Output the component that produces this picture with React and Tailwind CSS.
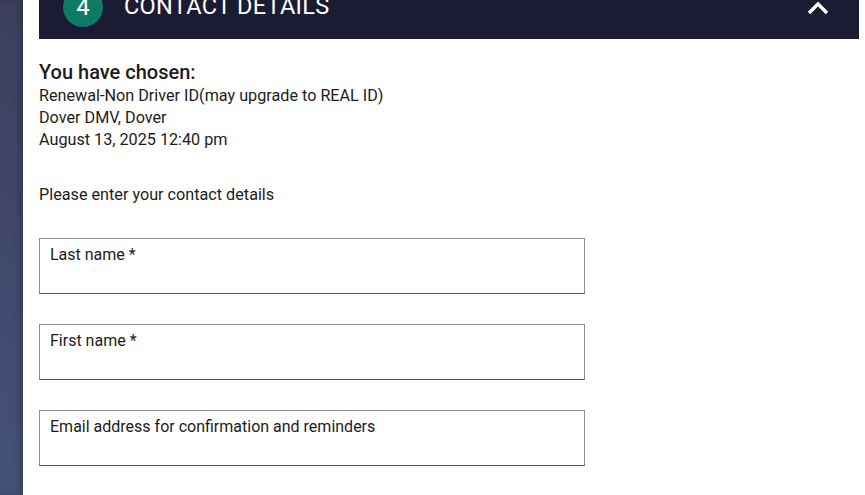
const Field = ({ label }) => {
    return (
        <div className="w-[546px] h-[56px] border border-[#8f8f8f] border-b-[#555555] px-[10px] pt-[6px] text-[16px] leading-[20px] text-[#1c1c1c]">
            {label}
        </div>
    );
};

const App = () => {
    return (
        <div className="w-[865px] h-[495px] overflow-hidden flex bg-white" style={{ fontFamily: "Roboto, 'Liberation Sans', sans-serif" }}>
            {/* left strip */}
            <div className="w-[23px] h-full shrink-0 bg-gradient-to-b from-[#3d3f5e] to-[#44527a] shadow-[inset_-4px_0_6px_rgba(0,0,0,0.18)]"></div>

            <div className="flex-1 pl-[16px] pr-[6px]">
                {/* header */}
                <div className="h-[60px] -mt-[21px] bg-[#1b1c33] flex items-center pl-[24px] pr-[30px] text-white">
                    <div className="w-[40px] h-[40px] -mt-[4px] rounded-full bg-[#0f7a66] flex items-center justify-center text-[24px] leading-none">4</div>
                    <div className="ml-[21px] -mt-[4px] text-[23.5px] tracking-[0.3px] leading-none">CONTACT DETAILS</div>
                    <svg className="ml-auto mt-[-2px]" width="22" height="14" viewBox="0 0 22 14">
                        <path d="M2 12 L11 3 L20 12" fill="none" stroke="white" strokeWidth="3.4" />
                    </svg>
                </div>

                <div className="pt-[20px] text-[#1c1c1c]">
                    <div className="text-[20px] font-medium leading-[26px]">You have chosen:</div>
                    <div className="text-[16.2px] leading-[22px]">
                        <div>Renewal-Non Driver ID(may upgrade to REAL ID)</div>
                        <div>Dover DMV, Dover</div>
                        <div>August 13, 2025 12:40 pm</div>
                    </div>
                    <div className="text-[16.2px] leading-[22px] mt-[33px]">Please enter your contact details</div>

                    <div className="mt-[32px] flex flex-col gap-[30px]">
                        <Field label="Last name *" />
                        <Field label="First name *" />
                        <Field label="Email address for confirmation and reminders" />
                    </div>
                </div>
            </div>
        </div>
    );
};

export default App;
